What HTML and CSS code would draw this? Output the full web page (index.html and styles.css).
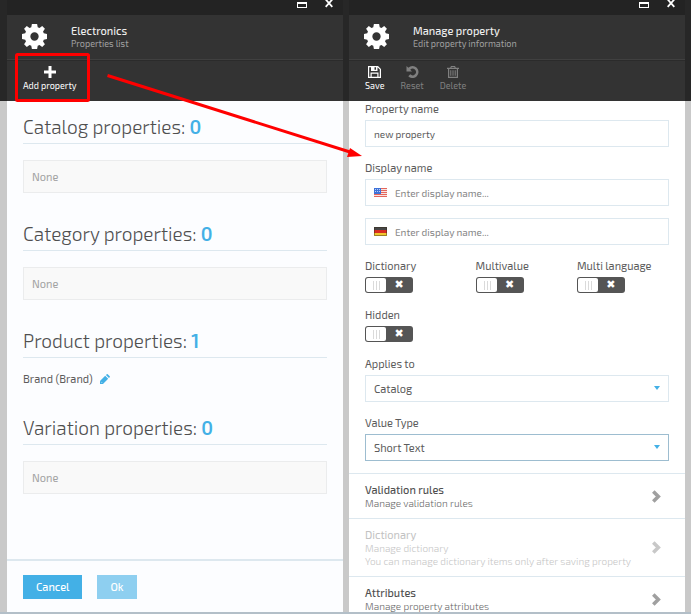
FILE: index.html
```html
<!DOCTYPE html>
<html lang="en">
<head>
<meta charset="utf-8">
<title>Manage property</title>
<link rel="stylesheet" href="styles.css">
</head>
<body>
<svg class="defs" aria-hidden="true">
  <symbol id="gear" viewBox="0 0 24 24"><path fill-rule="evenodd" d="M9.500 0h5l.6 3.100 1.700.7L19.400 2 22 4.600 20.200 7.200l.7 1.700 3.100.6v5l-3.100.6-.7 1.700L22 19.400 19.400 22l-2.600-1.800-1.700.7-.6 3.100h-5l-.6-3.100-1.700-.7L4.600 22 2 19.400l1.800-2.600-.7-1.700L0 14.500v-5l3.100-.6.7-1.700L2 4.600 4.600 2l2.600 1.800 1.700-.7zM12 8a4 4 0 1 0 0 8 4 4 0 0 0 0-8z"/></symbol>
  <symbol id="window" viewBox="0 0 10 6"><path fill-rule="evenodd" d="M0 0h10v6H0zM1 2v3h8V2z"/></symbol>
  <symbol id="close" viewBox="0 0 8 8"><path fill="none" stroke="currentColor" stroke-width="1.800" d="M.7-.5 7.300 6.800M7.300-.5.7 6.800"/></symbol>
  <symbol id="chevron" viewBox="0 0 9 13"><path fill="none" stroke="currentColor" stroke-width="3.600" d="M1.300 1.500 6.300 6.500l-5 5"/></symbol>
</svg>
<main class="blades">
  <section class="blade tinted">
    <div class="titlebar">
      <button aria-label="Maximize"><svg width="10" height="6"><use href="#window"/></svg></button>
      <button aria-label="Close"><svg width="8" height="8"><use href="#close"/></svg></button>
    </div>
    <header class="head">
      <svg class="gear" width="25" height="25"><use href="#gear"/></svg>
      <div><h1>Electronics</h1><p>Properties list</p></div>
    </header>
    <div class="toolbar">
      <button><svg width="12" height="12" viewBox="0 0 12 12"><path d="M4.500 0h3v4.500H12v3H7.500V12h-3V7.500H0v-3h4.500z"/></svg>Add property</button>
    </div>
    <div class="content lists">
      <section><h2>Catalog properties: <b>0</b></h2><p class="none">None</p></section>
      <section><h2>Category properties: <b>0</b></h2><p class="none">None</p></section>
      <section><h2>Product properties: <b>1</b></h2>
        <p class="item">Brand (Brand) <a href="#brand" aria-label="Edit Brand"><svg width="10" height="10" viewBox="0 0 11 11"><path d="M0 11V7.700L5.700 2 9 5.300 3.300 11zM6.500 1.200 7.500.3q.5-.5 1 0l2.200 2.200q.5.5 0 1l-.9 1z"/><path class="shine" d="M1.200 8.600 2.400 9.800"/></svg></a></p></section>
      <section><h2>Variation properties: <b>0</b></h2><p class="none">None</p></section>
    </div>
    <footer class="actions"><button>Cancel</button><button disabled>Ok</button></footer>
  </section>

  <section class="blade">
    <div class="titlebar">
      <button aria-label="Maximize"><svg width="10" height="6"><use href="#window"/></svg></button>
      <button aria-label="Close"><svg width="8" height="8"><use href="#close"/></svg></button>
    </div>
    <header class="head">
      <svg class="gear" width="25" height="25"><use href="#gear"/></svg>
      <div><h1>Manage property</h1><p>Edit property information</p></div>
    </header>
    <div class="toolbar">
      <button><svg width="13" height="12" viewBox="0 0 13 12"><path fill-rule="evenodd" d="M0 0h10l3 3v9H0zM1.200 1.200v9.600H2.500V6.500h8v4.300h1.300V3.500L9.500 1.200V5H3V1.200zM6.500 1.200v2.600H8V1.200zM3.700 7.700v3.100h5.600V7.700z"/></svg>Save</button>
      <button disabled><svg width="13" height="12" viewBox="0 0 13 12"><path d="M.5 0v5.500H6L4.200 3.700A3.300 3.300 0 1 1 4.300 8.300L2.300 10.300A6 6 0 1 0 2.300 1.800z"/></svg>Reset</button>
      <button disabled><svg width="12" height="12" viewBox="0 0 12 12"><path fill-rule="evenodd" d="M4 0h4l.8 1.700H12V3h-1v9H1V3H0V1.700h3.200zM4.700 1l-.3.700h3.200L7.300 1zM2.200 3v7.800h7.600V3zM3.300 4.200h1v5.500h-1zm2.200 0h1v5.500h-1zm2.200 0h1v5.500h-1z"/></svg>Delete</button>
    </div>
    <div class="content">
      <form class="form">
        <div class="field"><label for="pname">Property name</label><input class="box" id="pname" type="text" value="new property"></div>
        <div class="field">
          <label for="den">Display name</label>
          <div class="box flagged"><svg width="13" height="9" viewBox="0 0 13 9"><path fill="#f8e4e2" d="M0 0h13v9H0z"/><path stroke="#e4665c" d="M0 .5h13M0 2.500h13M0 4.500h13M0 6.500h13M0 8.500h13"/><path fill="#3f72d8" d="M0 0h7v6H0z"/><path stroke="#b9cffa" stroke-dasharray="1 1" d="M1 1.500h6M1 3.500h6"/></svg><input id="den" type="text" placeholder="Enter display name..."></div>
          <div class="box flagged"><svg width="13" height="9" viewBox="0 0 13 9"><path fill="#d92d20" d="M0 0h13v9H0z"/><path fill="#464646" d="M0 0h13v3H0z"/><path fill="#f1c62f" d="M0 6h13v3H0z"/><path fill="none" stroke="#352a18" stroke-opacity=".45" d="M.5.500h12v8H.5z"/></svg><input type="text" aria-label="Display name, German" placeholder="Enter display name..."></div>
        </div>
        <div class="switches">
          <div><label for="s1">Dictionary</label><input class="switch" id="s1" type="checkbox"></div>
          <div><label for="s2">Multivalue</label><input class="switch" id="s2" type="checkbox"></div>
          <div><label for="s3">Multi language</label><input class="switch" id="s3" type="checkbox"></div>
          <div><label for="s4">Hidden</label><input class="switch" id="s4" type="checkbox"></div>
        </div>
        <div class="field"><label for="applies">Applies to</label><div class="drop"><select class="box" id="applies"><option>Catalog</option></select></div></div>
        <div class="field"><label for="vtype">Value Type</label><div class="drop"><select class="box active" id="vtype"><option>Short Text</option></select></div></div>
      </form>
      <nav class="links">
        <a href="#rules"><span><strong>Validation rules</strong><small>Manage validation rules</small></span><svg width="9" height="13"><use href="#chevron"/></svg></a>
        <a href="#dictionary" class="off" aria-disabled="true"><span><strong>Dictionary</strong><small>Manage dictionary</small><small>You can manage dictionary items only after saving property</small></span><svg width="9" height="13"><use href="#chevron"/></svg></a>
        <a href="#attributes"><span><strong>Attributes</strong><small>Manage property attributes</small></span><svg width="9" height="13"><use href="#chevron"/></svg></a>
      </nav>
    </div>
  </section>
</main>
<svg class="callout" width="380" height="170" aria-hidden="true">
  <rect x="16.500" y="54.500" width="72" height="46" rx="1"/>
  <path d="M107.500 75.500 350 152"/>
  <path class="tip" d="M350 148 362 156 347 157z"/>
</svg>
</body>
</html>
```
FILE: styles.css
```css
* { box-sizing: border-box; }
body {
  margin: 0;
  font: 12px/16px "Exo 2", Roboto, sans-serif;
  color: #5c5c5c;
  background: #b3bfc8;
}
h1, h2, p { margin: 0; font-weight: 400; }
button, input, select { font: inherit; color: inherit; margin: 0; }
button { border: 0; padding: 0; background: none; }
svg { display: block; fill: currentColor; flex: none; }
.defs { position: absolute; width: 0; height: 0; }

.blades {
  display: grid;
  grid-template-columns: 1fr 1fr;
  gap: 6px;
  height: 100vh;
  padding: 0 6px 0 7px;
  border-bottom: 2px solid #b3bfc8;
  background: linear-gradient(#272727 101px, #c9c9c9 101px);
}
.blade { display: flex; flex-direction: column; min-width: 0; min-height: 0; overflow: hidden; background: #fff; }
.tinted { background: #fcfdff; }

.titlebar {
  display: flex;
  justify-content: flex-end;
  align-items: flex-start;
  gap: 18px;
  flex: none;
  height: 15px;
  padding-right: 10px;
  background: #232323;
  color: #fff;
}
.titlebar button:first-child { padding-top: 2px; }
.head {
  display: flex;
  align-items: center;
  gap: 24px;
  flex: none;
  height: 45px;
  padding: 0 15px 1px;
  background: #333;
  border-bottom: 1px solid #404040;
  color: #fff;
}
.head h1 { padding-top: 1px; font-size: 11px; line-height: 14px; font-weight: 500; color: #eee; }
.head p { font-size: 9px; line-height: 12px; color: #a0a0a0; }
.toolbar {
  display: flex;
  gap: 16px;
  flex: none;
  height: 41px;
  padding: 5px 16px 0;
  background: #333;
  border-top: 1px solid #2b2b2b;
}
.toolbar button {
  display: flex;
  flex-direction: column;
  align-items: center;
  align-self: flex-start;
  gap: 2px;
  font-size: 9px;
  line-height: 12px;
  color: #fff;
}
.toolbar button:disabled { color: #808080; }

.content { flex: 1; min-height: 0; overflow: hidden; }
.lists { display: flex; flex-direction: column; gap: 28px; padding: 13px 16px; }
.lists h2 {
  font-size: 19px;
  line-height: 26px;
  font-weight: 300;
  padding-bottom: 3px;
  border-bottom: 1px solid #dde8ef;
  color: #4f4f4f;
}
.lists b { font-weight: 600; color: #43b0e6; }
.none { margin-top: 16px; padding: 8px; height: 33px; border: 1px solid #ebeced; background: #f9f9f9; color: #a2a2a2; font-size: 11px; }
.item { display: flex; align-items: center; gap: 7px; margin-top: 13px; font-size: 11px; }
.item a { color: #43b0e6; }
.shine { fill: none; stroke: #fff; stroke-width: 1; stroke-opacity: .6; }
.actions { display: flex; gap: 15px; flex: none; padding: 14px 16px 13px; border-top: 2px solid #dde8ef; }
.actions button { height: 24px; padding: 0 13px; font-size: 11px; font-weight: 500; color: #fff; background: #43b0e6; }
.actions button:disabled { background: #8ecff0; }

.form { display: flex; flex-direction: column; gap: 13px; padding: 0 16px 12px; }
.field label, .switches label { display: block; margin-bottom: 3px; font-size: 11px; }
.box {
  display: block;
  width: 100%;
  height: 27px;
  padding: 0 8px;
  border: 1px solid #dde8ef;
  border-radius: 0;
  background: #fff;
  font-size: 11px;
  outline: 0;
}
input.box { font-size: 10px; }
.flagged { display: flex; align-items: center; gap: 8px; font-size: 10px; }
.flagged + .flagged { margin-top: 12px; }
.flagged input { flex: 1; min-width: 0; padding: 0; border: 0; outline: 0; }
::placeholder { color: #858585; opacity: 1; }
.drop { position: relative; }
.drop select { appearance: none; }
.drop .active { border-color: #9dbdd0; }
.drop::after {
  content: "";
  position: absolute;
  right: 9px;
  top: 11px;
  border: solid transparent;
  border-width: 4px 3px 0;
  border-top-color: #43b0e6;
  pointer-events: none;
}
.switches { display: grid; grid-template-columns: 12fr 11fr 10fr; row-gap: 14px; margin-bottom: 1px; }
.switch {
  appearance: none;
  display: flex;
  align-items: center;
  width: 48px;
  height: 16px;
  padding: 1px;
  border-radius: 3px;
  background: #555;
  color: #fff;
}
.switch::before {
  content: "";
  width: 20px;
  height: 14px;
  border-radius: 2px;
  background:
    repeating-linear-gradient(90deg, #dadada 0 1px, #fff 1px 3px) 7px 3px / 7px 9px no-repeat,
    #fff;
}
.switch::after { content: "✖"; flex: 1; text-align: center; font: 11px/14px "DejaVu Sans", sans-serif; }

.links a {
  display: flex;
  justify-content: space-between;
  align-items: center;
  padding: 8px 24px 8px 16px;
  border-top: 1px solid #dde8ef;
  color: #a0a0a0;
  text-decoration: none;
}
.links strong, .links small { display: block; }
.links strong { font-size: 11px; line-height: 15px; font-weight: 500; color: #505050; }
.links small { font-size: 10px; line-height: 13px; font-weight: 300; color: #666; }
.links .off { color: #c8c8c8; }
.links .off strong { color: #c2c2c2; font-weight: 400; }
.links .off small { color: #c6c6c6; }

.callout { position: absolute; left: 0; top: 0; pointer-events: none; fill: none; stroke: #f00; stroke-width: 3; }
.callout .tip { fill: #f00; stroke: none; }
```
